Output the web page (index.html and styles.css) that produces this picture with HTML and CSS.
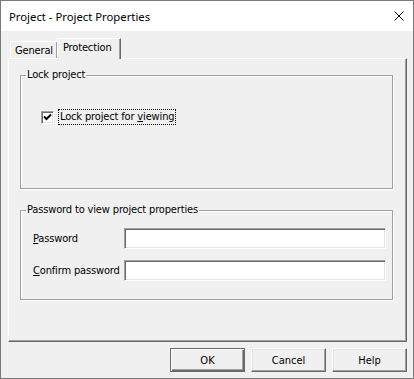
FILE: index.html
```html
<!DOCTYPE html>
<html lang="en">
<head>
<meta charset="utf-8">
<title>Project - Project Properties</title>
<link rel="stylesheet" href="styles.css">
</head>
<body>
<div class="window">

    <div class="titlebar">
        <span class="title">Project - Project Properties</span>
        <svg class="close" width="10" height="10" viewBox="0 0 10 10">
            <path d="M0.5 0.5 L9.5 9.5 M9.5 0.5 L0.5 9.5" stroke="#000" stroke-width="1" fill="none"/>
        </svg>
    </div>

    <div class="content">
        <div class="tabs">
            <div class="tab">General</div>
            <div class="tab selected">Protection</div>
        </div>

        <div class="panel">
            <fieldset class="group lock">
                <legend>Lock project</legend>
                <div class="check-row">
                    <span class="check">
                        <svg width="9" height="9" viewBox="0 0 9 9">
                            <path d="M1 3.5 L3.5 6 L8 1.5" stroke="#000" stroke-width="2" fill="none"/>
                        </svg>
                    </span>
                    <span class="focus">Lock project for <u>v</u>iewing</span>
                </div>
            </fieldset>

            <fieldset class="group pass">
                <legend>Password to view project properties</legend>
                <div class="field-row">
                    <label for="pw"><u>P</u>assword</label>
                    <input id="pw" type="password">
                </div>
                <div class="field-row">
                    <label for="pw2"><u>C</u>onfirm password</label>
                    <input id="pw2" type="password">
                </div>
            </fieldset>
        </div>

        <div class="buttons">
            <button class="default">OK</button>
            <button>Cancel</button>
            <button>Help</button>
        </div>
    </div>

</div>
</body>
</html>
```

FILE: styles.css
```css
body {
    margin: 0;
    font-family: "DejaVu Sans", sans-serif;
    font-stretch: condensed;
    font-size: 11px;
    letter-spacing: -0.15px;
    color: #000;
}

.window {
    width: 414px;
    height: 379px;
    box-sizing: border-box;
    border: 1px solid #7a7a7a;
    background-color: #f0f0f0;
    display: flex;
    flex-direction: column;
}

.titlebar {
    height: 30px;
    flex: none;
    background-color: #fff;
    display: flex;
    align-items: center;
    justify-content: space-between;
    padding: 0 9px 0 8px;
}

.title {
    font-family: "Noto Sans", sans-serif;
    font-stretch: normal;
    font-size: 11.3px;
    letter-spacing: 0;
}

.content {
    flex: 1;
    display: flex;
    flex-direction: column;
    padding: 7px 6px 6px 7px;
}

.tabs {
    height: 20px;
    flex: none;
    display: flex;
    align-items: flex-end;
    padding-left: 2px;
}

.tab {
    width: 48px;
    height: 17px;
    box-sizing: border-box;
    padding: 2px 0 0 4px;
    border: 1px solid;
    border-color: #fff #696969 transparent #fff;
    box-shadow: inset -1px 0 0 #a0a0a0;
    border-bottom: none;
}

.tab.selected {
    width: 64px;
    height: 21px;
    margin-bottom: -1px;
    margin-left: -1px;
    padding: 2px 0 0 5px;
    background-color: #f0f0f0;
    position: relative;
    z-index: 1;
}

.panel {
    height: 284px;
    flex: none;
    box-sizing: border-box;
    border: 1px solid;
    border-color: #fff #696969 #696969 #fff;
    box-shadow: inset -1px -1px 0 #a0a0a0;
    padding: 9px 13px 0 11px;
}

.group {
    margin: 0;
    padding: 0 5px;
    box-sizing: border-box;
    border: 1px solid #a0a0a0;
    box-shadow: inset 1px 1px 0 #fff, 1px 1px 0 #fff;
}

.group legend {
    padding: 0 1px;
    line-height: 14px;
}

.lock {
    height: 121px;
}

.pass {
    height: 97px;
    margin-top: 14px;
}

.check-row {
    display: flex;
    align-items: center;
    margin: 27px 0 0 15px;
}

.check {
    width: 13px;
    height: 13px;
    box-sizing: border-box;
    border: 1px solid;
    border-color: #a0a0a0 #fff #fff #a0a0a0;
    box-shadow: inset 1px 1px 0 #696969, inset -1px -1px 0 #e3e3e3;
    background-color: #fff;
    display: flex;
    align-items: center;
    justify-content: center;
}

.focus {
    margin-left: 4px;
    padding: 0 1px;
    line-height: 14px;
    border: 1px dotted #000;
}

.field-row {
    display: grid;
    grid-template-columns: 91px 262px;
    align-items: center;
    margin-top: 11px;
    padding-left: 7px;
}

.field-row + .field-row {
    margin-top: 11px;
}

input {
    height: 21px;
    box-sizing: border-box;
    margin: 0;
    border: 1px solid;
    border-color: #a0a0a0 #fff #fff #a0a0a0;
    box-shadow: inset 1px 1px 0 #696969, inset -1px -1px 0 #e3e3e3;
    background-color: #fff;
    outline: none;
}

.buttons {
    display: flex;
    justify-content: flex-end;
    gap: 6px;
    margin-top: 6px;
    height: 24px;
}

button {
    width: 75px;
    height: 24px;
    box-sizing: border-box;
    margin: 0;
    font: inherit;
    background-color: #f0f0f0;
    border: 1px solid;
    border-color: #fff #696969 #696969 #fff;
    box-shadow: inset -1px -1px 0 #a0a0a0, inset 1px 1px 0 #e3e3e3;
}

button.default {
    border-color: #696969;
    box-shadow: inset 1px 1px 0 #fff, inset -1px -1px 0 #696969, inset -2px -2px 0 #a0a0a0;
}
```
